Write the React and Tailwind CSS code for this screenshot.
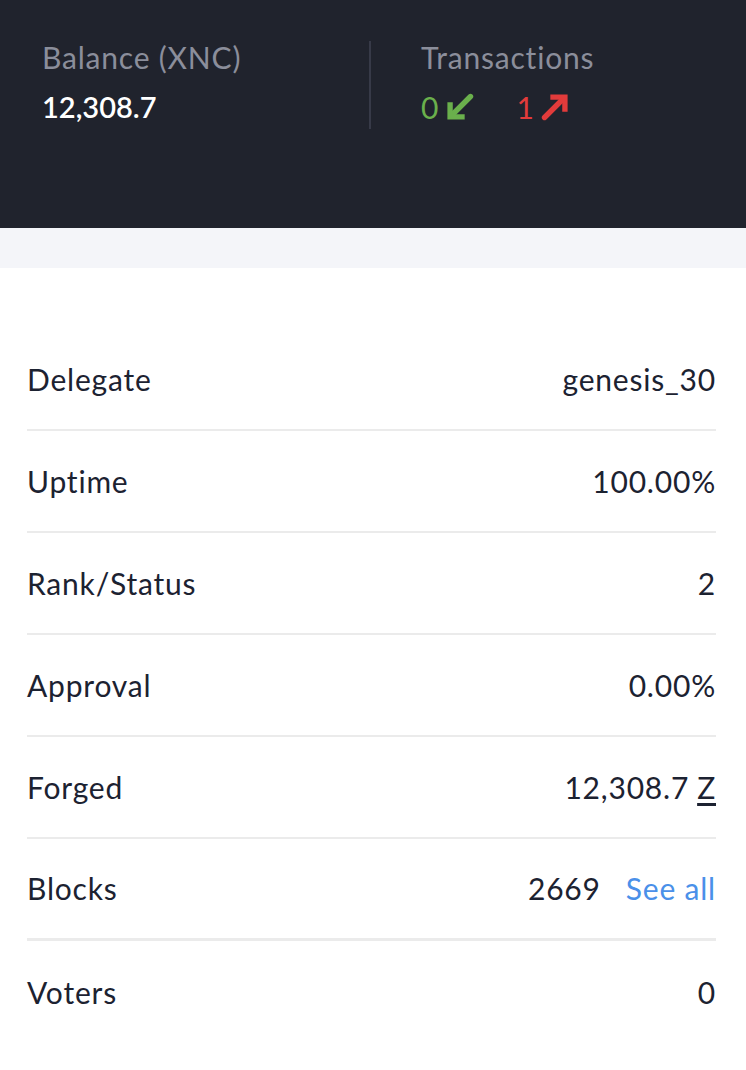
import React from "react";

const rows = [
  { label: "Delegate", value: "genesis_30" },
  { label: "Uptime", value: "100.00%" },
  { label: "Rank/Status", value: "2" },
  { label: "Approval", value: "0.00%" },
  { label: "Forged", value: "12,308.7", currency: true },
  { label: "Blocks", value: "2669", link: "See all", thick: true },
  { label: "Voters", value: "0", last: true },
];

function ArrowDownLeft({ className }) {
  return (
    <svg viewBox="0 0 24 24" className={className} fill="none" stroke="currentColor" strokeWidth="4.6" strokeLinecap="round" strokeLinejoin="round">
      <path d="M21 3L6 18" />
      <path d="M3.5 8v12.5H16" strokeLinecap="butt" strokeLinejoin="miter" />
    </svg>
  );
}

function ArrowUpRight({ className }) {
  return (
    <svg viewBox="0 0 24 24" className={className} fill="none" stroke="currentColor" strokeWidth="4.6" strokeLinecap="round" strokeLinejoin="round">
      <path d="M3 21L18 6" />
      <path d="M8 3.5h12.5V16" strokeLinecap="butt" strokeLinejoin="miter" />
    </svg>
  );
}

export default function App() {
  return (
    <div className="min-h-screen bg-white" style={{ fontFamily: "Lato, 'Liberation Sans', sans-serif" }}>
      {/* header stats */}
      <div className="bg-[#20232d] h-[228px] pt-[41px] flex">
        <div className="w-[371px] pl-[42px] border-r-2 border-[#373a48] h-[88px]">
          <div className="text-[30px] leading-[34px] tracking-[0.8px] text-[#8b8e9b] -mt-[1px]">Balance (XNC)</div>
          <div className="text-[29px] leading-[34px] text-white font-semibold mt-[16px]">12,308.7</div>
        </div>
        <div className="pl-[50px]">
          <div className="text-[30px] leading-[34px] tracking-[0.8px] text-[#8b8e9b] -mt-[1px]">Transactions</div>
          <div className="flex items-center mt-[16px] text-[30px] leading-[34px]">
            <span className="text-[#6ab04c]">0</span>
            <ArrowDownLeft className="w-[28px] h-[28px] ml-[8px] text-[#6ab04c]" />
            <span className="text-[#e23b3b] ml-[42px]">1</span>
            <ArrowUpRight className="w-[28px] h-[28px] ml-[7px] text-[#e23b3b]" />
          </div>
        </div>
      </div>
      <div className="h-[40px] bg-[#f4f5f9]" />

      {/* delegate details */}
      <div className="pl-[27px] pr-[30px] pt-[61px] pb-[27px]">
        {rows.map((row) => (
          <div
            key={row.label}
            className={
              "flex items-center justify-between h-[102px] text-[30px] tracking-[0.8px] text-[#1c2231] " +
              (row.last ? "" : row.thick ? "border-b-[3px] border-[#ebebeb]" : "border-b-2 border-[#ebebeb]")
            }
          >
            <span>{row.label}</span>
            <span className="flex items-center">
              {row.value}
              {row.currency && <span className="ml-[8px] underline underline-offset-4">Z</span>}
              {row.link && <span className="ml-[25px] text-[#4a90e9]">{row.link}</span>}
            </span>
          </div>
        ))}
      </div>
    </div>
  );
}
